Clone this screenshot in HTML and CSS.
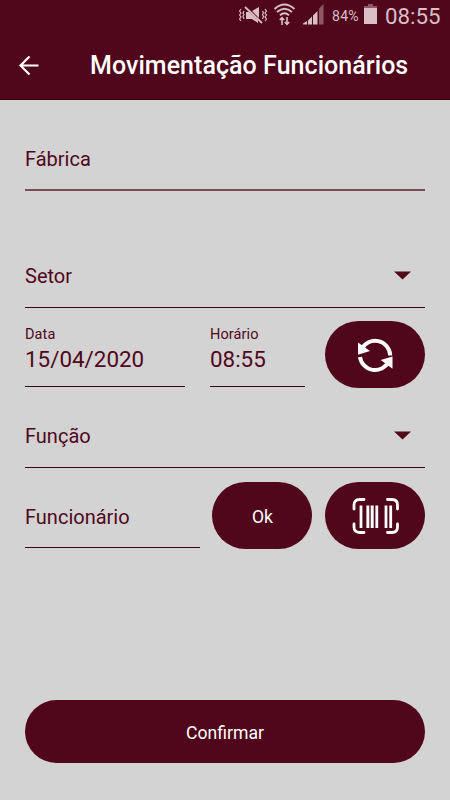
FILE: index.html
```
<!DOCTYPE html>
<html lang="pt-BR">
<head>
    <meta charset="utf-8">
    <title>Movimentação Funcionários</title>
    <link rel="stylesheet" href="styles.css">
</head>
<body>

    <header class="header">
        <div class="status-bar">
            <svg class="status-icons" width="90" height="32" viewBox="0 0 90 32">
                <!-- muted / vibrate -->
                <g fill="none" stroke="#d9bfc8" stroke-width="1.2">
                    <path d="M2 9l-1.500 2 1.500 2-1.500 2 1.500 2-1.500 2 1.500 2M5 11l-1 2 1 1.500-1 2 1 2.500M23.500 11l1 2-1 1.500 1 2-1 2.500M26 9l1.500 2-1.500 2 1.500 2-1.500 2 1.500 2-1.500 2"/>
                    <path d="M6 7l17 16" stroke-width="1.8"/>
                </g>
                <path d="M7 12h3l9 8.500v2.500l-6-4H7zM13 11l7-4v11z" fill="#d9bfc8"/>
                <!-- wifi -->
                <g fill="none" stroke="#d9bfc8" stroke-width="2">
                    <path d="M35.500 9q10-9 20 0M38 12q7.500-6.500 15 0M41 15.200q4.500-4 9 0"/>
                    <path d="M43 25v-7M40.800 20l2.200-2.400 2.200 2.400M48 17v7M45.800 22l2.200 2.400 2.200-2.400" stroke-width="1.6"/>
                </g>
                <!-- signal -->
                <path d="M64 24.500h4v-3.500l-4 2.500zM69 24.500h4v-8l-4 4zM74 24.500h4.500V11L74 15.500z" fill="#d9bfc8"/>
                <path d="M80 24.500h4.500V4L80 8.500z" fill="#8e5667"/>
            </svg>
            <span class="battery-level">84%</span>
            <svg class="battery" width="13" height="32" viewBox="0 0 13 32">
                <path d="M4 4h5v2H4z" fill="#8e5667"/>
                <path d="M0 6h13v2.500H0z" fill="#8e5667"/>
                <path d="M0 8h13v16H0z" fill="#d9bfc8"/>
            </svg>
            <span class="clock">08:55</span>
        </div>
        <div class="toolbar">
            <svg class="back" width="22" height="20" viewBox="0 0 22 20">
                <path d="M20.500 9.500H2.500M11.500 .5l-9 9 9 9" fill="none" stroke="#fff" stroke-width="2.200"/>
            </svg>
            <h1>Movimentação Funcionários</h1>
        </div>
    </header>

    <main class="form">
        <div class="field factory"><label>Fábrica</label></div>

        <div class="field select sector">
            <label>Setor</label>
            <svg width="17" height="9" viewBox="0 0 17 9"><path d="M0 .5h17l-8.500 8z" fill="#50061b"/></svg>
        </div>

        <div class="row time-row">
            <div class="field stacked date">
                <label>Data</label>
                <span class="value">15/04/2020</span>
            </div>
            <div class="field stacked hour">
                <label>Horário</label>
                <span class="value">08:55</span>
            </div>
            <button class="btn" aria-label="Atualizar">
                <svg width="40" height="40" viewBox="0 0 40 40">
                    <g fill="none" stroke="#fff" stroke-width="4">
                        <path d="M6.500 14A15.200 15.200 0 0 1 35.200 20.500"/>
                        <path d="M5 22A15.200 15.200 0 0 0 33.500 27"/>
                    </g>
                    <path d="M3 7.500v12.200L15 16zM37.500 21.500v12.300L25.700 25z" fill="#fff"/>
                </svg>
            </button>
        </div>

        <div class="field select role">
            <label>Função</label>
            <svg width="17" height="9" viewBox="0 0 17 9"><path d="M0 .5h17l-8.500 8z" fill="#50061b"/></svg>
        </div>

        <div class="row employee-row">
            <div class="field employee"><label>Funcionário</label></div>
            <button class="btn ok">Ok</button>
            <button class="btn" aria-label="Ler código">
                <svg width="48" height="38" viewBox="0 0 48 38">
                    <path d="M3 12V8q0-5.500 5.500-5.500H13M36.500 2.500H41q5.500 0 5.500 5.500v4M46.500 27v3q0 5.500-5.500 5.500H36.500M13 35.500H8.500q-5.500 0-5.500-5.500v-3" fill="none" stroke="#fff" stroke-width="2.800" stroke-linecap="round"/>
                    <path d="M10 8.500v22.500M16.800 8.500v22.500M21.300 8.500v22.500M25.800 8.500v22.500M35 8.500v22.500M39.700 8.500v22.500" stroke="#fff" stroke-width="2.800"/>
                    <path d="M19 8.500v22.500" stroke="#8e5667" stroke-width="1.800"/>
                </svg>
            </button>
        </div>

        <button class="btn confirm">Confirmar</button>
    </main>

</body>
</html>
```

FILE: styles.css
```
* { box-sizing: border-box; }
body { margin: 0; height: 800px; background-color: #d3d3d3; color: #50061b; font-family: Roboto, sans-serif; overflow: hidden; }

.header { height: 100px; background-color: #50061b; border-bottom: 1px solid #38000f; }
.status-bar { display: flex; height: 32px; padding-left: 239px; color: #d9bfc8; line-height: 32px; }
.status-icons { flex: none; }
.battery-level { width: 35px; padding-left: 3px; font-size: 14px; letter-spacing: .3px; }
.battery { flex: none; }
.clock { margin-left: 8px; font-size: 22.3px; line-height: 32px; }

.toolbar { display: flex; align-items: center; height: 67px; padding-left: 18px; }
.toolbar h1 { margin: 0 0 0 50px; color: #fff; font-size: 25px; font-weight: 500; line-height: 30px; letter-spacing: .05px; white-space: nowrap; }

.form { display: flex; flex-direction: column; height: 700px; padding: 0 25px; }
.row { display: flex; align-items: flex-start; height: 67px; }
.field { display: flex; align-items: center; border-bottom: 1px solid #35000c; font-size: 20px; }
.factory { height: 91px; padding-top: 28px; border-bottom: 2px solid #7d4d57; }
.select { justify-content: space-between; padding-right: 14px; }
.sector { height: 67px; margin-top: 50px; padding-top: 3px; }
.time-row { margin-top: 13px; }
.stacked { flex-direction: column; align-items: flex-start; height: 66px; padding-top: 5px; }
.stacked label { font-size: 14.5px; line-height: 18px; letter-spacing: .1px; }
.value { font-size: 22.4px; line-height: 30px; }
.date { width: 160px; }
.hour { width: 95px; margin-left: 25px; }
.role { height: 67px; margin-top: 13px; padding-top: 3px; }
.employee-row { margin-top: 14px; }
.employee { width: 175px; height: 66px; padding-top: 4px; }

.btn { display: flex; align-items: center; justify-content: center; width: 100px; height: 67px; margin-left: auto; padding: 0; border: 0; border-radius: 34px; background-color: #50061b; color: #fff; font-family: inherit; font-size: 17.6px; }
.ok { margin-left: 12px; padding: 2px 0 0 1px; }
.confirm { width: 400px; height: 63px; margin: auto 0 37px; padding-top: 2px; border-radius: 32px; }
```
